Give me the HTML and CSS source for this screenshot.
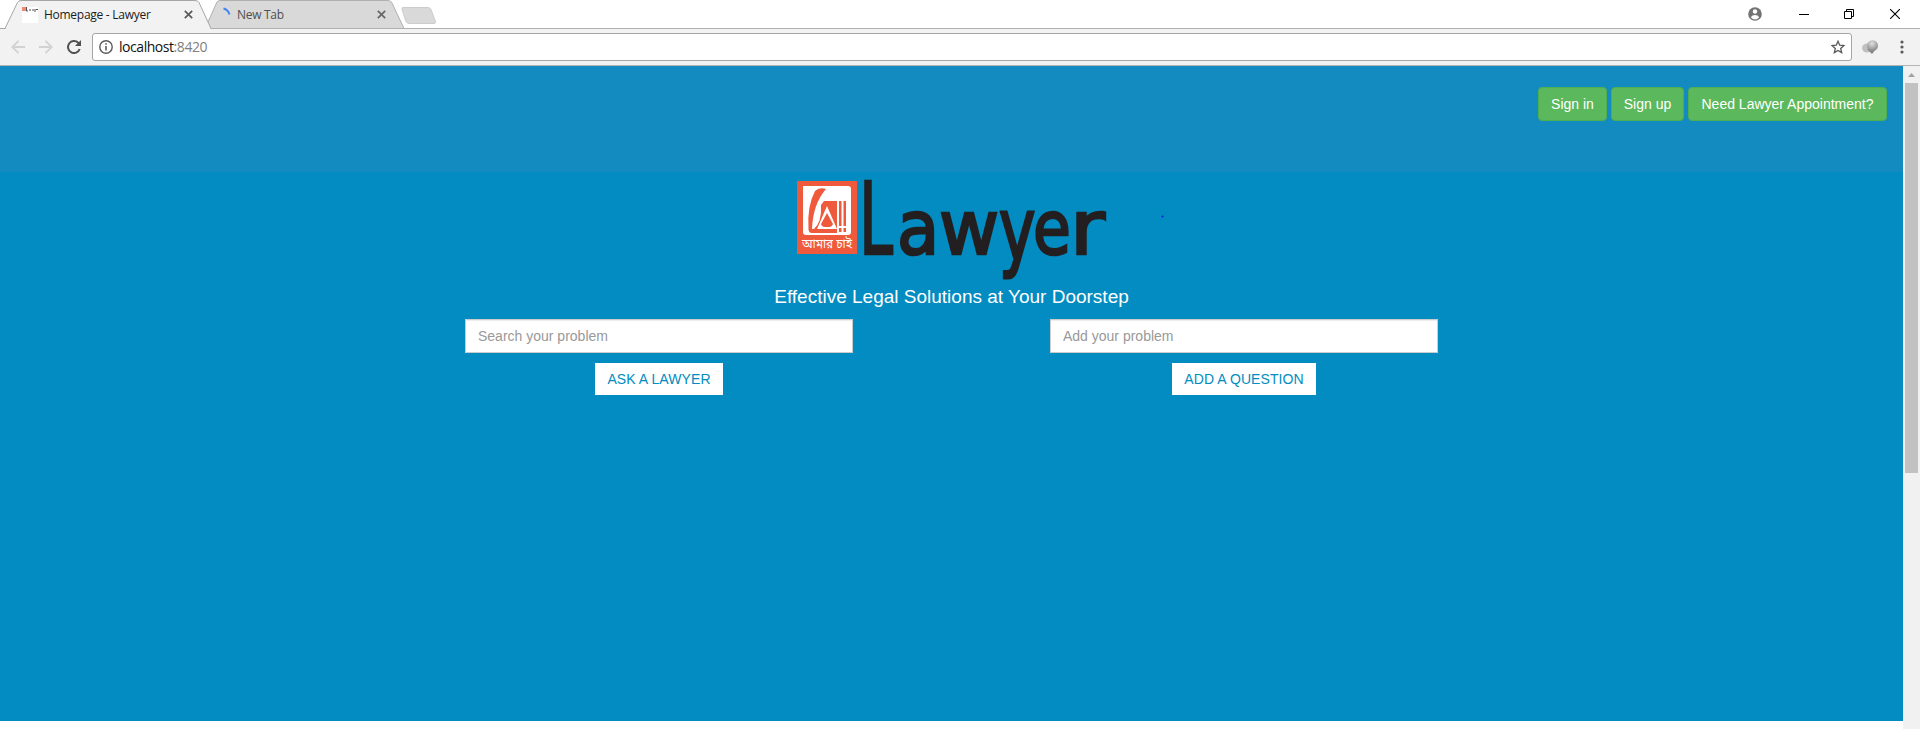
FILE: index.html
```html
<!DOCTYPE html>
<html lang="en">
<head>
<meta charset="utf-8">
<title>Homepage - Lawyer</title>
<link rel="stylesheet" href="styles.css">
</head>
<body>
<div class="tabstrip">
  <svg class="tab-shapes" width="460" height="29" viewBox="0 0 460 29">
    <path d="M205 28.5 L217 2 Q218 .5 220 .5 H388 Q391 .5 392 3 L404 28.5Z" fill="#d9d9d9" stroke="#b0b0b0"/>
    <path d="M0 28.5 H460" stroke="#b0b0b0"/>
    <path d="M0 28.5 H5 L17.500 2.500 Q18.500 .5 21 .5 H195 Q198 .5 199 2.500 L211 28.500" fill="#f2f2f2" stroke="#a6a6a6"/>
    <path d="M6 28.500 H210" stroke="#f2f2f2"/>
    <path d="M403 7.500 H428 Q430 7.500 431 9.500 L435.500 21.500 Q436 23.500 434 23.500 H409 Q407 23.500 406 21.500 L402 9.500 Q401.500 7.500 403 7.500Z" fill="#d9d9d9" stroke="#cccccc"/>
  </svg>
  <div class="tab tab-active">
    <svg class="favicon" width="16" height="16" viewBox="0 0 16 16"><path fill="#fff" d="M0 0h16v16H0z"/><path d="M0 0h4v4H0z" fill="#f08a78"/><path d="M4.500 0v4h1.500M7 3h2M10 3h2M13 2v3M14 2.500h2" stroke="#554f50" fill="none"/></svg>
    <span class="tab-title title-home">Homepage - Lawyer</span>
    <svg class="close" width="9" height="9" viewBox="0 0 9 9"><path d="M.8.8l7.400 7.400M8.200.8L.8 8.200" stroke="#5a5a5a" stroke-width="1.700"/></svg>
  </div>
  <div class="tab tab-new">
    <svg class="spinner" width="16" height="16" viewBox="0 0 16 16"><path d="M1.500 1.500Q6 2.500 7.500 7.500" stroke="#4285f4" stroke-width="2" fill="none"/></svg>
    <span class="tab-title title-new">New Tab</span>
    <svg class="close" width="9" height="9" viewBox="0 0 9 9"><path d="M.8.8l7.400 7.400M8.200.8L.8 8.200" stroke="#666" stroke-width="1.700"/></svg>
  </div>
  <div class="window-controls">
    <svg width="14" height="14" viewBox="0 0 14 14"><circle cx="7" cy="7" r="6.800" fill="#737373"/><circle cx="7" cy="4.500" r="2.200" fill="#fff"/><path d="M2.800 10.200Q4 8 7 8t4.200 2.200Q9.500 12.500 7 12.500T2.800 10.200" fill="#fff"/></svg>
    <svg width="10" height="10" viewBox="0 0 10 10"><path d="M0 5.500h10" stroke="#000"/></svg>
    <svg width="10" height="10" viewBox="0 0 10 10"><path d="M.5 2.500h7v7h-7zM2.500 2.500v-2h7v7h-2" fill="none" stroke="#000"/></svg>
    <svg width="10" height="10" viewBox="0 0 10 10"><path d="M0 0l10 10M10 0L0 10" stroke="#000" stroke-width="1.100"/></svg>
  </div>
</div>
<div class="toolbar">
  <svg class="nav back" width="14" height="14" viewBox="0 0 14 14"><path d="M14 7H1.500M7.500.8L1.300 7l6.200 6.200" fill="none" stroke="#d2d2d2" stroke-width="1.800"/></svg>
  <svg class="nav forward" width="14" height="14" viewBox="0 0 14 14"><path d="M0 7h12.500M6.500.8L12.700 7l-6.200 6.200" fill="none" stroke="#d2d2d2" stroke-width="1.800"/></svg>
  <svg class="nav reload" width="14" height="14" viewBox="0 0 14 14"><path d="M12.700 9A6 6 0 1 1 11.200 2.700L12.300 4" fill="none" stroke="#505050" stroke-width="2"/><path d="M14 0v6H8z" fill="#505050"/></svg>
  <div class="omnibox">
    <svg width="14" height="14" viewBox="0 0 14 14"><circle cx="7" cy="7" r="6.200" fill="none" stroke="#5a5a5a" stroke-width="1.400"/><path d="M7 6v4.500M7 3.200v1.600" stroke="#5a5a5a" stroke-width="1.600"/></svg>
    <span class="url">localhost<span class="port">:8420</span></span>
    <svg class="star" width="14" height="14" viewBox="0 0 14 14"><path d="M7 1.300l1.700 3.900 4.200.4-3.200 2.800 1 4.200L7 10.400l-3.700 2.200 1-4.200L1.100 5.600l4.200-.4z" fill="none" stroke="#5a5a5a" stroke-width="1.300"/></svg>
  </div>
  <svg class="extension" width="17" height="15" viewBox="0 0 17 15">
    <defs><radialGradient id="ball" cx=".45" cy=".3" r=".7"><stop offset="0" stop-color="#e2e2e2"/><stop offset="1" stop-color="#858585"/></radialGradient></defs>
    <ellipse cx="5" cy="8" rx="5" ry="4.500" fill="#c0c0c0"/><path d="M5 9l5 5 4-5z" fill="#858585"/><circle cx="10.500" cy="5.700" r="5.500" fill="url(#ball)"/>
  </svg>
  <svg class="menu" width="4" height="14" viewBox="0 0 4 14"><g fill="#5a5a5a"><circle cx="2" cy="2" r="1.600"/><circle cx="2" cy="7" r="1.600"/><circle cx="2" cy="12" r="1.600"/></g></svg>
</div>
<div class="viewport">
  <div class="page">
    <header class="site-header">
      <a class="btn-success sign-in">Sign in</a>
      <a class="btn-success sign-up">Sign up</a>
      <a class="btn-success appointment">Need Lawyer Appointment?</a>
    </header>
    <main class="hero">
      <svg class="logo" width="370" height="110" viewBox="797 172 370 110">
        <path d="M797 181h60v73h-60z" fill="#f05a3c"/>
        <path d="M803 186H848Q851 186 851 189V232Q851 235 848 235H806Q803 235 803 232Z" fill="#fff"/>
        <path d="M826 189Q819 187 815 191Q807 206 808.500 229Q808.500 233 812 233H837V229H812Q813 204 826 189Z" fill="#f05a3c"/>
        <path d="M824 201H837V229L827 206L817 229H814Q822 222 821 205Z" fill="#f05a3c"/>
        <path d="M827 213L833 224Q832 227 829 227H825Q822 227 821 224ZM839 201h2.500v25H839zM843.500 201h2.500v25h-2.500zM839 228h2.500v4H839zM843.500 228h2.500v4h-2.500z" fill="#f05a3c"/>
        <text class="bangla" x="802" y="248" textLength="50" lengthAdjust="spacingAndGlyphs">আমার চাই</text>
        <g class="wordmark">
          <text class="cap" transform="translate(859 254) scale(.61 1)">L</text>
          <text transform="translate(897 254) scale(.92 1)">a</text>
          <text transform="translate(939 254) scale(.98 1)">w</text>
          <text transform="translate(999 260) scale(.82 1.17)">y</text>
          <text transform="translate(1033 254) scale(.82 1)">e</text>
          <text transform="translate(1070 254) scale(1.13 1)">r</text>
        </g>
        <circle cx="1162.500" cy="216.500" r="1" fill="#0018e8"/>
      </svg>
      <p class="tagline">Effective Legal Solutions at Your Doorstep</p>
      <div class="forms">
        <form class="problem">
          <input type="text" placeholder="Search your problem">
          <button class="ask" type="button">ASK A LAWYER</button>
        </form>
        <form class="problem">
          <input type="text" placeholder="Add your problem">
          <button class="add" type="button">ADD A QUESTION</button>
        </form>
      </div>
    </main>
  </div>
  <div class="scrollbar">
    <svg width="7" height="4" viewBox="0 0 7 4"><path d="M0 4L3.500 0L7 4z" fill="#a3a3a3"/></svg>
    <div class="thumb"></div>
  </div>
</div>
</body>
</html>
```
FILE: styles.css
```css
* { box-sizing: border-box; }
body {
  margin: 0;
  height: 729px;
  overflow: hidden;
  background: #fff;
  font-family: "Liberation Sans", Arial, sans-serif;
  font-size: 14px;
}
svg { display: block; flex: none; }

.tabstrip {
  position: relative;
  display: flex;
  height: 29px;
  border-bottom: 1px solid #b0b0b0;
  font: 12px "Open Sans", "Noto Sans", sans-serif;
}
.tab-shapes { position: absolute; left: 0; top: 0; }
.tab { position: relative; display: flex; align-items: center; height: 29px; }
.tab-active { width: 208px; padding: 0 15px 0 22px; }
.tab-new { width: 192px; padding: 0 14px 0 14px; }
.tab-title { flex: 1; margin-left: 6px; white-space: nowrap; line-height: 29px; }
.title-home { letter-spacing: -.27px; color: #1c1c1c; }
.title-new { margin-left: -1px; letter-spacing: -.3px; color: #505050; }
.window-controls {
  display: flex;
  align-items: center;
  gap: 36px;
  height: 27px;
  margin-left: auto;
  padding-right: 20px;
}
.window-controls svg:first-child { margin-right: 1px; }
.window-controls svg:nth-child(2) { margin-right: -1px; }

.toolbar {
  display: flex;
  align-items: center;
  height: 37px;
  padding: 0 16px 0 11px;
  background: #f2f2f2;
  border-bottom: 1px solid #b4b4b4;
}
.nav { margin-right: 14px; }
.reload { margin-right: 11px; }
.omnibox {
  display: flex;
  align-items: center;
  flex: 1;
  height: 28px;
  padding: 0 6px;
  border: 1px solid #a6a6a6;
  border-radius: 3px;
  background: #fff;
}
.url {
  flex: 1;
  margin-left: 6px;
  font: 14px/26px "Open Sans", "Noto Sans", sans-serif;
  letter-spacing: -.45px;
  color: #111;
}
.port { color: #808080; }
.extension { margin-left: 10px; }
.menu { margin-left: 21px; }

.viewport { display: flex; height: 663px; }
.page { flex: 1; }
.site-header {
  display: flex;
  justify-content: flex-end;
  align-items: flex-start;
  gap: 4px;
  height: 106px;
  padding: 21px 16px 0 0;
  background: #138bc1;
}
.btn-success {
  height: 34px;
  border: 1px solid #4cae4c;
  border-radius: 4px;
  background: #5cb85c;
  color: #fff;
  line-height: 32px;
  text-align: center;
  white-space: nowrap;
}
.sign-in { width: 69px; }
.sign-up { width: 73px; }
.appointment { width: 199px; }

.hero {
  display: flex;
  flex-direction: column;
  height: 549px;
  background: #028cc1;
}
.logo { margin-left: 797px; overflow: visible; }
.wordmark {
  font: 75px "DejaVu Sans", sans-serif;
  fill: #231f20;
  stroke: #231f20;
  stroke-width: 2.5px;
}
.cap { font-size: 100px; }
.bangla { font: 12px "Noto Sans Bengali", "Noto Sans", sans-serif; fill: #fff; }
.tagline {
  margin: 0;
  height: 37px;
  color: #fff;
  font-size: 19px;
  line-height: 30px;
  text-align: center;
}
.forms { display: flex; justify-content: center; gap: 197px; }
.problem {
  display: flex;
  flex-direction: column;
  align-items: center;
  gap: 10px;
  width: 388px;
}
.problem input {
  width: 100%;
  height: 34px;
  padding: 6px 12px;
  border: 1px solid #ccc;
  box-shadow: inset 0 1px 1px rgba(0, 0, 0, .075);
  background: #fff;
  font: inherit;
}
.problem input::placeholder { color: #999; opacity: 1; }
.problem button {
  height: 32px;
  padding: 0 0 1px;
  border: 0;
  background: #fff;
  color: #028cc1;
  font: inherit;
  letter-spacing: .08px;
}
.ask { width: 128px; }
.add { width: 144px; }

.scrollbar {
  display: flex;
  flex-direction: column;
  align-items: center;
  width: 17px;
  padding-top: 7px;
  background: #f1f1f1;
}
.thumb { width: 13px; height: 390px; margin-top: 6px; background: #c1c1c1; }
```
